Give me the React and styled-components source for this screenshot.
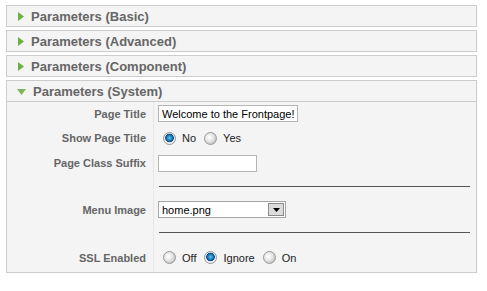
import React from "react";
import styled, { createGlobalStyle } from "styled-components";

const Global = createGlobalStyle`
  body {
    margin: 0;
    background: #fff;
    font-family: "Liberation Sans", Arial, sans-serif;
  }
`;

const Wrap = styled.div`
  padding: 5px 0 0 6px;
  width: 471px;
  display: flex;
  flex-direction: column;
  gap: 3px;
`;

const Panel = styled.div`
  border: 1px solid #cccccc;
  background: #f4f4f4;
`;

const Header = styled.div`
  height: 20px;
  display: flex;
  align-items: center;
  padding-left: 10px;
  gap: 7px;
  font-size: 13px;
  font-weight: bold;
  color: #666666;
  border-bottom: ${(p) => (p.$open ? "1px solid #cccccc" : "none")};
`;

const Arrow = ({ open }) =>
  open ? (
    <svg width="9" height="6" viewBox="0 0 9 6" style={{ marginTop: 1 }}>
      <path d="M0 0 L9 0 L4.5 6 Z" fill="#7fb55a" />
    </svg>
  ) : (
    <svg width="6" height="9" viewBox="0 0 6 9" style={{ marginLeft: 1 }}>
      <path d="M0 0 L6 4.5 L0 9 Z" fill="#6fb043" />
    </svg>
  );

const Table = styled.table`
  width: 100%;
  border-collapse: collapse;
`;

const Row = styled.tr`
  height: ${(p) => p.$h}px;
  & + & td {
    border-top: 1px solid #e6e6e6;
  }
`;

const Label = styled.td`
  width: 139px;
  padding: 0 7px 0 0;
  text-align: right;
  font-size: 11px;
  font-weight: bold;
  color: #666666;
  border-right: 1px solid #e6e6e6;
  white-space: nowrap;
`;

const Value = styled.td`
  padding: 0 5px 0 4px;
  font-size: 11px;
  color: #222;
`;

const TextBox = styled.div`
  width: ${(p) => p.$w}px;
  height: 17px;
  box-sizing: border-box;
  border: 1px solid #b5b5b5;
  background: #fff;
  font-size: 11px;
  color: #000;
  padding: 2px 0 0 3px;
  white-space: nowrap;
  overflow: hidden;
`;

const Radios = styled.div`
  display: flex;
  align-items: center;
  padding-left: 5px;
`;

const Dot = styled.span`
  width: 13px;
  height: 13px;
  box-sizing: border-box;
  border-radius: 50%;
  border: 1px solid #9a9a9a;
  background: ${(p) =>
    p.$on
      ? "radial-gradient(circle at 50% 45%, #6ec6f0 0, #1c7fbf 2.5px, #0b4f86 4px, #e4e4e4 4.6px, #f8f8f8 6px)"
      : "radial-gradient(circle at 40% 40%, #ffffff 0, #e6e6e6 4px, #c8c8c8 6.5px)"};
  margin-right: 6px;
`;

const Opt = styled.span`
  margin-right: 8px;
  color: #222;
`;

const Select = styled.div`
  width: 128px;
  height: 17px;
  box-sizing: border-box;
  border: 1px solid #a5a5a5;
  background: #fff;
  display: flex;
  align-items: center;
  justify-content: space-between;
  font-size: 11px;
  color: #000;
  padding-left: 3px;
`;

const Drop = styled.span`
  width: 16px;
  height: 13px;
  margin-right: 1px;
  box-sizing: border-box;
  border: 1px solid #8a8a8a;
  background: #dcdcdc;
  display: flex;
  align-items: center;
  justify-content: center;
`;

const Rule = styled.div`
  height: 1px;
  background: #555555;
  margin: 0 1px 0 1px;
`;

const RadioSet = ({ options, checked }) => (
  <Radios>
    {options.map((o) => (
      <React.Fragment key={o}>
        <Dot $on={o === checked} />
        <Opt>{o}</Opt>
      </React.Fragment>
    ))}
  </Radios>
);

export default function App() {
  return (
    <>
      <Global />
      <Wrap>
        {["Basic", "Advanced", "Component"].map((n) => (
          <Panel key={n}>
            <Header>
              <Arrow />
              Parameters ({n})
            </Header>
          </Panel>
        ))}
        <Panel>
          <Header $open>
            <Arrow open />
            Parameters (System)
          </Header>
          <Table>
            <tbody>
              <Row $h={23}>
                <Label>Page Title</Label>
                <Value>
                  <TextBox $w={140}>Welcome to the Frontpage!</TextBox>
                </Value>
              </Row>
              <Row $h={26}>
                <Label>Show Page Title</Label>
                <Value>
                  <RadioSet options={["No", "Yes"]} checked="No" />
                </Value>
              </Row>
              <Row $h={24}>
                <Label>Page Class Suffix</Label>
                <Value>
                  <TextBox $w={99} />
                </Value>
              </Row>
              <Row $h={22}>
                <Label />
                <Value>
                  <Rule />
                </Value>
              </Row>
              <Row $h={25}>
                <Label>Menu Image</Label>
                <Value>
                  <Select>
                    home.png
                    <Drop>
                      <svg width="7" height="4" viewBox="0 0 7 4">
                        <path d="M0 0 L7 0 L3.5 4 Z" fill="#000" />
                      </svg>
                    </Drop>
                  </Select>
                </Value>
              </Row>
              <Row $h={21}>
                <Label />
                <Value>
                  <Rule />
                </Value>
              </Row>
              <Row $h={29}>
                <Label>SSL Enabled</Label>
                <Value>
                  <RadioSet options={["Off", "Ignore", "On"]} checked="Ignore" />
                </Value>
              </Row>
            </tbody>
          </Table>
        </Panel>
      </Wrap>
    </>
  );
}
